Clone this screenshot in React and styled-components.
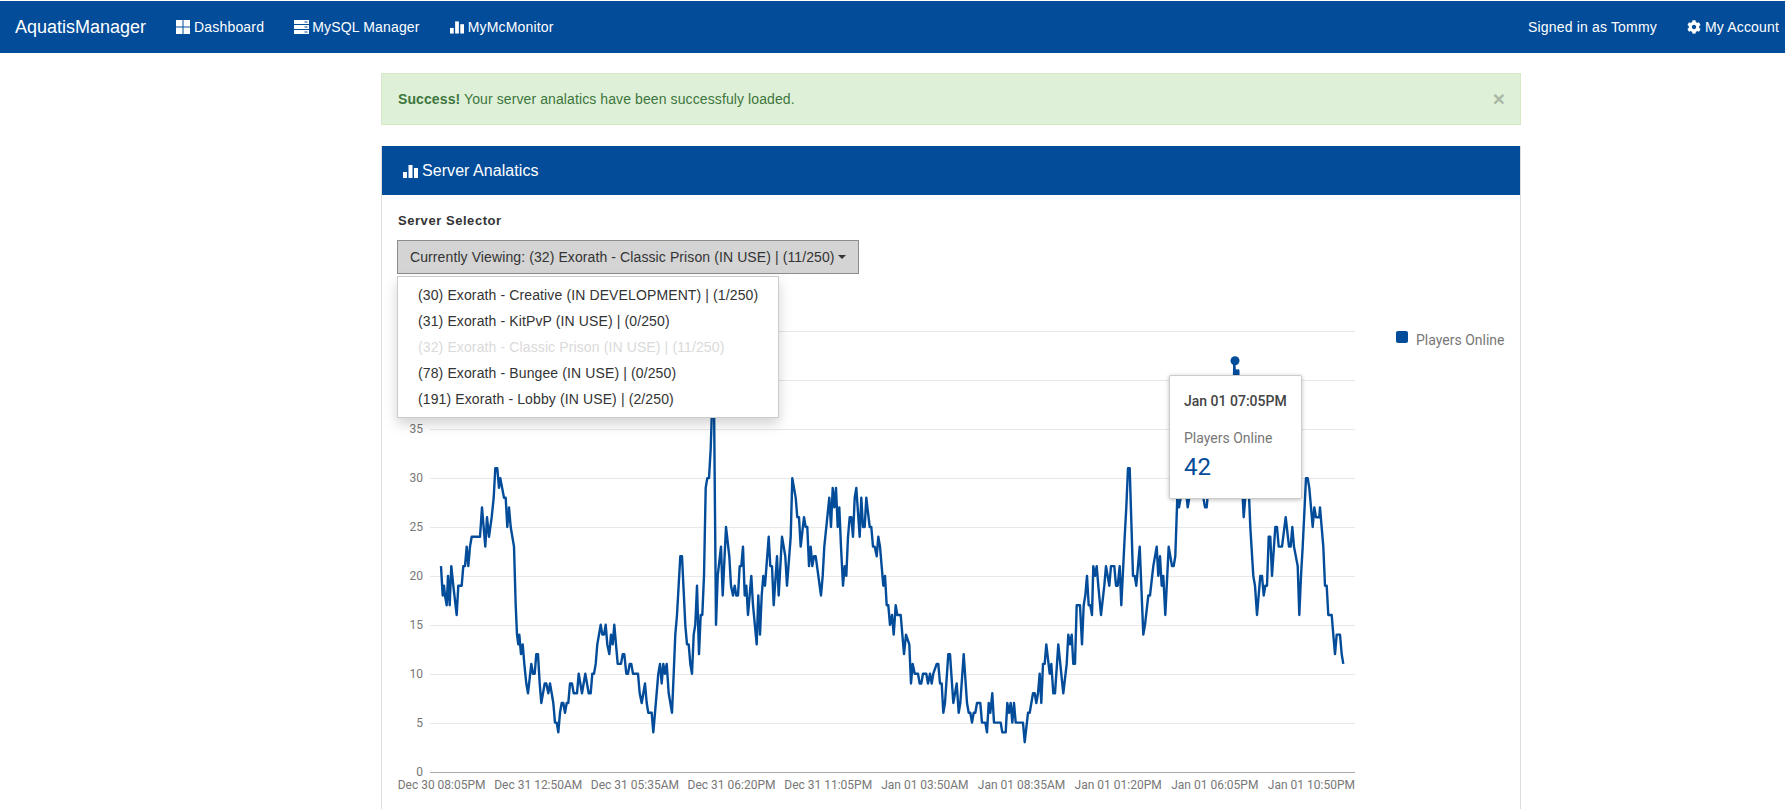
import React from 'react';
import styled, { createGlobalStyle } from 'styled-components';
import { FaCog } from 'react-icons/fa';

const NAVY = '#024c9a';

const GlobalStyle = createGlobalStyle`
  html, body {
    margin: 0;
    height: 100%;
    overflow: hidden;
    background: #fff;
  }
  body {
    font-family: "Liberation Sans", Arial, sans-serif;
    font-size: 14px;
    line-height: 20px;
    color: #333;
  }
`;

// vertices read off the chart: [zoom x, players]. first block x = 390 + zx / 3, second x = 880 + zx / 3
const leftPart = [
  [153,21],[158,18],[162,19],[165,18],[170,17],[174,20],[179,17],[184,21],[190,19],[200,16],[205,19],[215,19],[220,21],[225,21],[230,23],[235,21],[240,23],[245,24],[270,24],[276,27],[286,23],[291,26],[297,24],[305,26],[311,28],[316,31],[322,31],[327,29],[331,30],[342,28],[347,28],[352,25],[357,27],[362,25],[372,23],[377,17],[381,14],[385,13],[388,14],[393,12],[398,13],[403,11],[409,9],[414,8],[424,11],[429,10],[434,10],[439,12],[444,12],[449,9],[454,7],[464,9],[469,9],[475,8],[480,9],[485,8],[490,7],[495,5],[500,5],[505,4],[510,6],[515,7],[520,7],[525,6],[530,7],[535,7],[540,9],[546,9],[551,8],[561,8],[566,10],[576,8],[586,10],[596,8],[602,8],[607,10],[612,10],[617,11],[622,13],[632,15],[637,14],[642,14],[647,15],[652,13],[658,12],[663,14],[668,13],[673,15],[683,11],[693,11],[698,12],[703,12],[709,10],[714,10],[719,11],[724,11],[729,10],[744,10],[749,8],[755,7],[765,9],[770,7],[775,6],[785,6],[790,4],[795,6],[805,10],[810,11],[815,9],[820,11],[825,10],[830,11],[836,8],[846,6],[851,10],[856,14],[861,16],[871,22],[876,22],[886,15],[891,13],[896,13],[901,11],[906,10],[911,14],[916,15],[921,19],[927,12],[932,16],[937,16],[942,20],[947,29],[952,30],[957,30],[962,33],[967,38],[972,38],[978,15],[983,20],[993,23],[998,18],[1008,25],[1018,22],[1023,19],[1029,18],[1034,19],[1039,18],[1044,18],[1049,21],[1054,21],[1059,23],[1064,18],[1069,19],[1074,16],[1084,20],[1089,17],[1100,13],[1105,18],[1110,14],[1115,18],[1120,20],[1125,19],[1136,24],[1141,21],[1146,21],[1151,17],[1161,22],[1166,18],[1176,24],[1186,22],[1191,19],[1202,24],[1207,30],[1217,28],[1222,26],[1227,26],[1232,23],[1242,26],[1247,25],[1252,25],[1257,21],[1262,23],[1267,21],[1272,22],[1277,22],[1293,18],[1298,20],[1303,23],[1318,28],[1323,25],[1328,29],[1333,27],[1338,29],[1343,25],[1348,27],[1353,23],[1359,19],[1364,21],[1369,20],[1374,24],[1379,26],[1384,26],[1389,24],[1394,28],[1399,29],[1409,24],[1414,28],[1419,25],[1424,25],[1429,28],[1439,25],[1444,25],[1449,23],[1454,23],[1460,22],[1465,24],
];
const rightPart = [
  [0,23],[10,19],[15,20],[20,17],[25,17],[30,15],[36,16],[41,14],[47,17],[52,16],[62,16],[72,12],[78,14],[88,13],[93,9],[98,11],[104,10],[114,10],[119,9],[124,9],[129,10],[139,10],[144,9],[150,10],[155,9],[160,10],[170,11],[175,11],[180,9],[185,9],[190,6],[195,7],[205,12],[210,12],[220,7],[230,9],[236,6],[241,7],[251,12],[261,7],[266,6],[271,6],[276,5],[281,6],[286,6],[291,7],[301,7],[306,5],[316,5],[321,4],[326,7],[331,6],[337,8],[342,5],[362,5],[367,4],[377,4],[382,7],[387,6],[392,7],[397,5],[402,7],[407,5],[429,5],[434,3],[444,6],[449,6],[459,8],[464,8],[469,7],[474,8],[479,10],[484,7],[489,11],[494,11],[499,13],[509,10],[514,11],[520,8],[525,8],[535,13],[550,8],[560,11],[565,14],[570,13],[575,14],[580,11],[585,11],[590,17],[595,17],[600,17],[606,13],[611,17],[616,18],[621,20],[626,17],[631,17],[636,16],[640,21],[645,20],[650,21],[655,19],[663,16],[673,19],[678,21],[688,19],[693,21],[703,21],[708,19],[713,19],[719,21],[724,17],[734,24],[739,27],[744,31],[749,31],[759,20],[764,20],[769,19],[779,23],[790,14],[795,15],[805,18],[810,18],[820,21],[830,23],[835,20],[840,22],[845,19],[850,20],[856,16],[866,23],[876,21],[881,21],[886,22],[892,28],[897,27],[902,28],[912,28],[920,28],[923,27],[928,28],[965,29],[975,27],[980,27],[985,29],[1055,29],[1061,38],[1063,42],[1066,38],[1069,41],[1072,38],[1075,41],[1078,35],[1083,31],[1088,28],[1091,26],[1096,28],[1101,29],[1106,29],[1111,25],[1120,20],[1125,19],[1131,16],[1141,20],[1146,20],[1151,18],[1156,19],[1161,19],[1166,24],[1171,24],[1176,20],[1186,25],[1191,25],[1196,23],[1206,23],[1217,26],[1227,23],[1232,23],[1237,25],[1242,23],[1253,21],[1258,16],[1263,20],[1268,23],[1278,30],[1283,30],[1288,29],[1298,25],[1303,27],[1308,26],[1318,26],[1320,27],[1330,23],[1335,19],[1340,19],[1345,16],[1355,16],[1360,14],[1365,12],[1370,14],[1380,14],[1385,12],[1390,11],
];

// svg starts at page x 397, y 320
const toX = x => x - 397;
const toY = v => 451.5 - v * 9.78;
const linePoints = [
  ...leftPart.map(([x, v]) => [390 + x / 3, v]),
  ...rightPart.map(([x, v]) => [880 + x / 3, v]),
].map(([x, v]) => `${toX(x).toFixed(1)},${toY(v).toFixed(1)}`).join(' ');

const yTicks = [0, 5, 10, 15, 20, 25, 30, 35, 40, 45];
// the 40 and 45 labels sit behind the open menu
const hiddenLabels = [40, 45];
const xLabels = [
  'Dec 30 08:05PM', 'Dec 31 12:50AM', 'Dec 31 05:35AM', 'Dec 31 06:20PM', 'Dec 31 11:05PM',
  'Jan 01 03:50AM', 'Jan 01 08:35AM', 'Jan 01 01:20PM', 'Jan 01 06:05PM', 'Jan 01 10:50PM',
];

const servers = [
  { label: '(30) Exorath - Creative (IN DEVELOPMENT) | (1/250)' },
  { label: '(31) Exorath - KitPvP (IN USE) | (0/250)' },
  { label: '(32) Exorath - Classic Prison (IN USE) | (11/250)', disabled: true },
  { label: '(78) Exorath - Bungee (IN USE) | (0/250)' },
  { label: '(191) Exorath - Lobby (IN USE) | (2/250)' },
];

const Navbar = styled.nav`
  margin-top: 1px;
  height: 52px;
  background: ${NAVY};
  color: #fff;
  display: flex;
  align-items: center;
  justify-content: space-between;
`;

const NavGroup = styled.div`
  display: flex;
  align-items: center;
`;

const Brand = styled.a`
  font-size: 18px;
  padding: 0 15px;
`;

const NavLink = styled.a`
  display: flex;
  align-items: center;
  gap: ${p => p.$gap || 4}px;
  padding: 0 ${p => p.$right || 15}px 0 15px;
  color: #fff;
  letter-spacing: 0.17px;
`;

const Page = styled.main`
  width: 1140px;
  margin: 20px 0 0 381px;
`;

const Alert = styled.div`
  display: flex;
  justify-content: space-between;
  align-items: center;
  height: 52px;
  box-sizing: border-box;
  padding: 0 15px 0 16px;
  background: #dff0d8;
  border: 1px solid #d6e9c6;
  color: #3c763d;
  letter-spacing: 0.1px;
`;

const Close = styled.span`
  font-size: 21px;
  font-weight: bold;
  color: #a9b8a6;
`;

const Panel = styled.section`
  margin-top: 21px;
  border: 1px solid #ddd;
  border-top: none;
  height: 700px;
`;

const PanelHeading = styled.header`
  display: flex;
  align-items: center;
  gap: 4px;
  height: 49px;
  padding-left: 21px;
  background: ${NAVY};
  color: #fff;
  font-size: 16px;
  letter-spacing: 0.06px;
`;

const PanelBody = styled.div`
  padding: 15px;
`;

const FieldLabel = styled.label`
  display: block;
  font-weight: bold;
  font-size: 13px;
  letter-spacing: 0.55px;
  padding: 1px 0 0 1px;
  margin-bottom: 9px;
`;

const Dropdown = styled.div`
  position: relative;
`;

const DropdownButton = styled.button`
  display: inline-flex;
  align-items: center;
  gap: 3px;
  height: 34px;
  padding: 0 12px;
  background: #d4d4d4;
  border: 1px solid #8c8c8c;
  font: inherit;
  letter-spacing: 0.1px;
  color: #333;
`;

const Caret = styled.span`
  width: 0;
  height: 0;
  border-top: 4px solid #333;
  border-left: 4px solid transparent;
  border-right: 4px solid transparent;
`;

const Menu = styled.ul`
  position: absolute;
  top: 36px;
  left: 0;
  z-index: 5;
  margin: 0;
  padding: 5px 0;
  list-style: none;
  background: #fff;
  border: 1px solid #ccc;
  box-shadow: 0 6px 12px rgba(0, 0, 0, 0.175);
`;

const MenuItem = styled.li`
  height: 26px;
  line-height: 26px;
  padding: 0 20px;
  white-space: nowrap;
  letter-spacing: 0.12px;
  color: ${p => (p.$disabled ? '#dadada' : '#333')};
`;

const ChartRow = styled.div`
  display: flex;
  margin-top: 46px;
`;

const ChartWrap = styled.div`
  position: relative;
  width: 963px;
  height: 490px;
  flex: none;
`;

const AxisText = styled.text`
  font-family: Roboto, sans-serif;
  font-size: 12px;
  fill: #777;
`;

const ChartTooltip = styled.div`
  position: absolute;
  left: 772px;
  top: 55px;
  width: 133px;
  height: 124px;
  box-sizing: border-box;
  padding: 15px 14px;
  background: #fff;
  border: 1px solid #ccc;
  border-radius: 2px;
  box-shadow: 0 1px 4px rgba(0, 0, 0, 0.25);
  font-family: Roboto, sans-serif;
`;

const TipDate = styled.div`
  font-size: 14px;
  font-weight: 500;
  color: #444;
  white-space: nowrap;
`;

const TipName = styled.div`
  margin-top: 17px;
  font-size: 14px;
  color: #777;
`;

const TipValue = styled.div`
  margin-top: 5px;
  font-size: 24px;
  line-height: 28px;
  color: ${NAVY};
`;

const Legend = styled.div`
  display: flex;
  gap: 8px;
  margin: 10px 0 0 36px;
  font-family: Roboto, sans-serif;
  font-size: 14px;
  color: #777;
  white-space: nowrap;
`;

const LegendSwatch = styled.span`
  width: 12px;
  height: 12px;
  margin-top: 1px;
  border-radius: 2px;
  background: ${NAVY};
`;

const GridIcon = () => (
  <svg width="14" height="14" viewBox="0 0 14 14" fill="#fff">
    <rect width="6.5" height="6.5" />
    <rect x="7.5" width="6.5" height="6.5" />
    <rect y="7.5" width="6.5" height="6.5" />
    <rect x="7.5" y="7.5" width="6.5" height="6.5" />
  </svg>
);

const ServerIcon = () => (
  <svg width="15" height="14" viewBox="0 0 15 14" fill="#fff">
    <path fillRule="evenodd" d="M0 0h15v4H0zM10.5 1.5v1h3v-1zM0 5h15v4H0zM10.5 6.5v1h3v-1zM0 10h15v4H0zM10.5 11.5v1h3v-1z" />
  </svg>
);

const StatsIcon = ({ width = 15 }) => (
  <svg width={width} height="14" viewBox="0 0 15 14" fill="#fff">
    <rect y="8" width="4" height="6" />
    <rect x="5.5" y="1" width="4" height="13" />
    <rect x="11" y="4" width="4" height="10" />
  </svg>
);

const App = () => (
  <>
    <GlobalStyle />
    <Navbar>
      <NavGroup>
        <Brand>AquatisManager</Brand>
        <NavLink><GridIcon />Dashboard</NavLink>
        <NavLink $gap={3}><ServerIcon />MySQL Manager</NavLink>
        <NavLink $gap={4}><StatsIcon width={14} />MyMcMonitor</NavLink>
      </NavGroup>
      <NavGroup>
        <NavLink>Signed in as Tommy</NavLink>
        <NavLink $right={6}><FaCog size={14} />My Account</NavLink>
      </NavGroup>
    </Navbar>
    <Page>
      <Alert>
        <span><b>Success!</b> Your server analatics have been successfuly loaded.</span>
        <Close>×</Close>
      </Alert>
      <Panel>
        <PanelHeading><StatsIcon />Server Analatics</PanelHeading>
        <PanelBody>
          <FieldLabel>Server Selector</FieldLabel>
          <Dropdown>
            <DropdownButton>
              Currently Viewing: (32) Exorath - Classic Prison (IN USE) | (11/250) <Caret />
            </DropdownButton>
            <Menu>
              {servers.map(s => (
                <MenuItem key={s.label} $disabled={s.disabled}>{s.label}</MenuItem>
              ))}
            </Menu>
          </Dropdown>
          <ChartRow>
            <ChartWrap>
              <svg width="963" height="490" viewBox="0 0 963 490">
                {yTicks.map(t => (
                  <g key={t}>
                    <line
                      x1="33"
                      x2="958"
                      y1={Math.round(toY(t)) + 0.5}
                      y2={Math.round(toY(t)) + 0.5}
                      stroke={t === 0 ? '#aaa' : '#e8e8e8'}
                    />
                    {!hiddenLabels.includes(t) && (
                      <AxisText x="26" y={toY(t) + 4} textAnchor="end">{t}</AxisText>
                    )}
                  </g>
                ))}
                {xLabels.map((label, i) => (
                  <AxisText key={label} x={44.6 + i * 96.65} y="469" textAnchor="middle">{label}</AxisText>
                ))}
                <polyline points={linePoints} fill="none" stroke={NAVY} strokeWidth="2.4" strokeLinejoin="round" />
                <circle cx={toX(1235)} cy={toY(42)} r="4.5" fill={NAVY} />
              </svg>
              <ChartTooltip>
                <TipDate>Jan 01 07:05PM</TipDate>
                <TipName>Players Online</TipName>
                <TipValue>42</TipValue>
              </ChartTooltip>
            </ChartWrap>
            <Legend>
              <LegendSwatch />
              Players Online
            </Legend>
          </ChartRow>
        </PanelBody>
      </Panel>
    </Page>
  </>
);

export default App;
